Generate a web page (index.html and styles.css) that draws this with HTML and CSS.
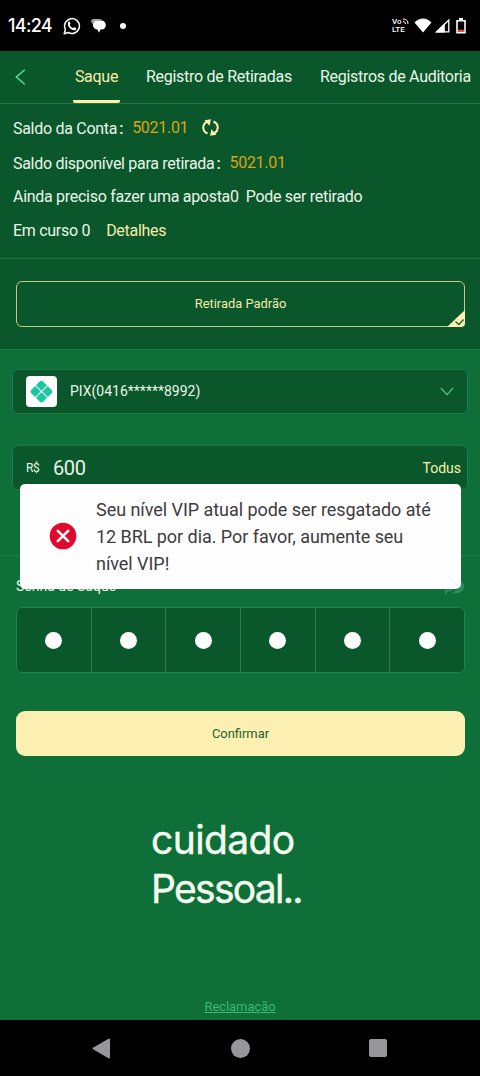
FILE: index.html
```html
<!DOCTYPE html>
<html lang="pt-BR">
<head>
<meta charset="utf-8">
<meta name="viewport" content="width=device-width, initial-scale=1">
<title>Saque</title>
<link rel="stylesheet" href="styles.css">
</head>
<body>
<div class="screen">
  <header class="status-bar">
    <span class="clock">14:24</span>
    <svg class="ic-whatsapp" width="18" height="18" viewBox="0 0 18 18" fill="none"><path d="M1.200 16.700l1.200-4.300A7.400 7.400 0 1 1 5.400 15.500z" stroke="#fff" stroke-width="1.500" stroke-linejoin="round"/><path d="M5.300 4.900c.6-.8 1.200-.7 1.500 0l.7 1.600c.1.500-.6 1-.8 1.400.7 1.500 1.800 2.500 3.300 3.200.5-.3.900-1.100 1.400-.9l1.600.8c.7.400.2 1.400-.4 1.900-1.200.9-3 .3-4.700-.8C5.900 10.700 3.900 7.200 5.300 4.900z" fill="#fff"/></svg>
    <svg class="ic-chat" width="15" height="14" viewBox="0 0 15 14"><path d="M3 0h5.500a4 4 0 0 1 3 1.500H7C4 1.500 2.600 3.500 2.500 6L0 2.500C0 1 1 0 3 0z" fill="#aaa"/><path d="M6.500 1.600h3.700a4.500 4.500 0 0 1 .3 9H9.400L8 13.800l-1.600-3.200a4.500 4.500 0 0 1 .1-9z" fill="#fff"/></svg>
    <span class="dot"></span>
    <div class="signals">
      <span class="volte"><span class="vo">Vo<svg width="7" height="7" viewBox="0 0 7 7" fill="none" stroke="#fff"><path d="M1 1q5 0 5 5M1 3.500q2.500 0 2.500 2.500"/></svg></span><span>LTE</span></span>
      <svg class="wifi" width="18" height="15" viewBox="0 0 18 15"><path d="M.5 4.500Q4.500.5 9 .5t8.500 4L9 14.600z" fill="#fff"/></svg>
      <svg class="cell" width="15" height="15" viewBox="0 0 15 15"><path d="M.2 14.500L9.800 5v9.500z" fill="#fff"/><path d="M1.800 13.800L13.800 2v11.800z" fill="none" stroke="#fff" stroke-width="1.300"/></svg>
      <svg width="10" height="16" viewBox="0 0 10 16"><path d="M1 2.700h8v12H1z" fill="none" stroke="#fff" stroke-width="1.600"/><path d="M3 0h4v2.500H3z" fill="#fff"/><path d="M1.800 11.700h6.400v2.300H1.800z" fill="#f04b3c"/></svg>
    </div>
  </header>

  <nav class="tabs">
    <svg class="back" width="11" height="16" viewBox="0 0 11 16" fill="none" stroke="#5ce09d" stroke-width="1.500"><path d="M9.800.8L1.300 8l8.500 7.200"/></svg>
    <a class="tab tab-active">Saque</a>
    <a class="tab tab-withdrawals">Registro de Retiradas</a>
    <a class="tab tab-audit">Registros de Auditoria</a>
  </nav>

  <section class="balance">
    <div class="row row-account"><span>Saldo da Conta</span><b class="colon">:</b><span class="amount">5021.01</span>
      <svg class="refresh" width="17" height="17" viewBox="0 0 17 17" fill="none" stroke="#fff0b0" stroke-width="2"><path d="M5.500 14.500C-.2 12 .2 5.500 4.600 2.800M11.500 2.500c5.700 2.500 5.300 9 .9 11.700"/><path d="M2.500 1.200L9 .3 7.500 6.800zM14.500 15.800l-6.500.9 1.500-6.500z" fill="#fff0b0" stroke="none"/></svg>
    </div>
    <div class="row row-available"><span>Saldo disponível para retirada</span><b class="colon">:</b><span class="amount">5021.01</span></div>
    <div class="row row-bet"><span>Ainda preciso fazer uma aposta0</span><span>Pode ser retirado</span></div>
    <div class="row row-progress"><span>Em curso 0</span><a class="details">Detalhes</a></div>
  </section>

  <section class="method">
    <div class="method-option">Retirada Padrão
      <svg class="corner" width="19" height="17" viewBox="0 0 19 17"><path d="M0 17L18 0v13q0 4-4 4z" fill="#fff0b0"/><path d="M8.500 11.500l3.300 3 4.700-5" fill="none" stroke="#17602d" stroke-width="1.300"/></svg>
    </div>
  </section>

  <section class="amount-section">
    <div class="field account-field">
      <span class="pix"><svg width="23" height="23" viewBox="0 0 21 21"><g transform="rotate(45 10.500 10.500)" fill="#19c8a0"><path d="M2.800 5.500a2.500 2.500 0 0 1 2.500-2.500h4.700v7H2.800zM11 3H15.700A2.500 2.500 0 0 1 18.200 5.500V10H11zM2.800 11H10v7.200H5.300A2.500 2.500 0 0 1 2.800 15.700zM11 11h7.200v4.700a2.500 2.500 0 0 1-2.500 2.500H11z"/></g></svg></span>
      <span class="account">PIX(0416******8992)</span>
      <svg class="chevron" width="14" height="9" viewBox="0 0 14 9" fill="none" stroke="#4fb881" stroke-width="1.400"><path d="M1 1l6 6.700L13 1"/></svg>
    </div>
    <div class="field value-field"><span class="currency">R$</span><span class="value">600</span><a class="all">Todus</a></div>
  </section>

  <section class="password">
    <div class="password-head"><span>Senha de Saque</span>
      <svg width="21" height="16" viewBox="0 0 21 16"><path d="M1 15V8l3 2.500 4-3v3.500l-4 .5zM17 1q5 4 2 9-3 4-11 3.500l3-3q6 0 6-9.500z" fill="#279158"/></svg>
    </div>
    <div class="pin"><i></i><i></i><i></i><i></i><i></i><i></i></div>
    <button class="confirm">Confirmar</button>
  </section>

  <div class="caption"><span class="caption-a">cuidado</span><span class="caption-b">Pessoal..</span></div>
  <a class="complaint">Reclamação</a>

  <footer class="nav-bar">
    <svg width="19" height="21" viewBox="0 0 19 21"><path d="M1.500 10.500L17 1.500v18z" fill="#999699" stroke="#999699" stroke-width="2" stroke-linejoin="round"/></svg>
    <span class="home"></span>
    <span class="recent"></span>
  </footer>

  <div class="toast" role="alert">
    <svg width="28" height="28" viewBox="0 0 28 28"><circle cx="14" cy="14" r="13.300" fill="#e2092f"/><path d="M8.800 8.800l10.400 10.400m0-10.400l-10.400 10.400" stroke="#fff" stroke-width="2.600" stroke-linecap="round"/></svg>
    <p>Seu nível VIP atual pode ser resgatado até<br>12 BRL por dia. Por favor, aumente seu<br>nível VIP!</p>
  </div>
</div>
</body>
</html>
```
FILE: styles.css
```css
* { box-sizing: border-box; }
body { margin: 0; background: #0f6f39; font-family: Roboto, sans-serif; color: #e9f6e8; }
.screen { position: relative; width: 480px; height: 1076px; display: flex; flex-direction: column; overflow: hidden; background: #0f6f39; }

.status-bar { flex: none; height: 51px; background: #000; display: flex; align-items: center; padding-left: 8px; color: #fff; }
.clock { width: 55px; font: 500 18px/20px Inter, sans-serif; letter-spacing: -0.7px; }
.ic-chat { margin-left: 10px; }
.dot { width: 6px; height: 6px; margin-left: 14px; border-radius: 50%; background: #fff; }
.signals { display: flex; align-items: center; margin-left: auto; padding-right: 14px; }
.volte { display: flex; flex-direction: column; width: 22px; font-size: 8px; line-height: 8px; font-weight: 500; }
.vo { display: flex; }
.wifi { margin-right: 3px; }
.cell { margin-right: 6px; }

.tabs { flex: none; height: 53px; display: flex; background: #0a572b; border-bottom: 1px solid #267344; font-size: 16px; letter-spacing: -0.28px; line-height: 52px; white-space: nowrap; }
.back { margin: 18px 42px 0 15px; }
.tab-active { width: 47px; height: 52px; line-height: 52px; margin-left: 5px; text-align: center; color: #f9eda8; border-bottom: 3px solid #fff0a9; border-radius: 2px; }
.tab-withdrawals { margin-left: 26px; }
.tab-audit { margin-left: 28px; }

.balance { flex: none; height: 155px; padding: 14px 13px 0; background: #0a572b; border-bottom: 1px solid #267344; font-size: 16px; letter-spacing: -0.29px; line-height: 22px; white-space: nowrap; }
.row { display: flex; }
.colon { width: 15px; padding-left: 2px; font-weight: 500; }
.amount { color: #d9a51b; margin-top: -1px; }
.row-account { height: 35px; }
.refresh { margin: 1px 0 0 14px; }
.row-available { height: 33px; }
.row-bet { height: 34px; gap: 7px; }
.details { margin-left: 16px; color: #f8eba8; }

.method { flex: none; height: 91px; padding: 22px 15px 0 16px; background: #0a572b; border-bottom: 1px solid #1c7c45; }
.method-option { position: relative; height: 46px; border: 1px solid #c2cd83; border-radius: 6px; text-align: center; font-size: 12.9px; line-height: 44px; color: #f3eba6; }
.corner { position: absolute; right: -2px; bottom: -1px; }

.amount-section { flex: none; height: 206px; padding: 19px 12px 0; border-bottom: 1px solid #1b7d46; }
.field { display: flex; align-items: center; height: 45px; border: 1px solid #1b7b45; border-radius: 6px; background: #0a572b; }
.account-field { padding: 0 13px; }
.pix { display: flex; align-items: center; justify-content: center; width: 31px; height: 31px; border-radius: 4px; background: #fff; }
.account { margin: -2px 0 0 13px; font-size: 14px; }
.chevron { margin-left: auto; }
.value-field { margin-top: 31px; padding: 0 6px 0 13px; }
.currency { width: 27px; font-size: 12px; letter-spacing: -0.3px; }
.value { font-size: 20px; letter-spacing: -0.4px; }
.all { margin-left: auto; color: #f8efac; font-size: 14px; }

.password { flex: none; height: 201px; padding: 20px 15px 0 16px; }
.password-head { display: flex; justify-content: space-between; height: 31px; font-size: 14px; line-height: 20px; }
.password-head svg { margin-top: 4px; }
.pin { display: flex; height: 66px; border: 1px solid #22824c; border-radius: 6px; background: #0a572b; overflow: hidden; }
.pin i { flex: 1; display: flex; align-items: center; justify-content: center; border-right: 1px solid #22824c; }
.pin i:last-child { border-right: 0; }
.pin i::before { content: ""; width: 17px; height: 17px; border-radius: 50%; background: #fff; }
.confirm { display: block; width: 100%; height: 45px; margin-top: 38px; border: 0; border-radius: 9px; background: #fbefb1; color: #1c642c; font: 12.9px Roboto, sans-serif; }

.caption { flex: none; display: flex; flex-direction: column; margin: 58px 0 0 151px; color: #f4fff1; font: 400 39px/49px Inter, sans-serif; -webkit-text-stroke: 0.4px #f4fff1; }
.caption-a { letter-spacing: -0.6px; }
.caption-b { letter-spacing: -1.7px; }
.complaint { margin: auto auto 5px; font-size: 12.9px; line-height: 16px; color: #3cb775; text-decoration: underline; }

.nav-bar { flex: none; height: 56px; display: flex; align-items: center; padding-left: 92px; background: #000; }
.home { width: 19px; height: 19px; margin-left: 120px; border-radius: 50%; background: #999699; }
.recent { width: 18px; height: 18px; margin-left: 119px; border-radius: 2px; background: #999699; }

.toast { position: absolute; left: 20px; top: 484px; width: 441px; height: 105px; display: flex; align-items: center; padding: 0 0 1px 29px; border-radius: 5px; background: #fefefe; }
.toast p { margin: 0 0 0 19px; font-size: 18px; letter-spacing: -0.05px; line-height: 27px; color: #3d3b3e; white-space: nowrap; }
```
